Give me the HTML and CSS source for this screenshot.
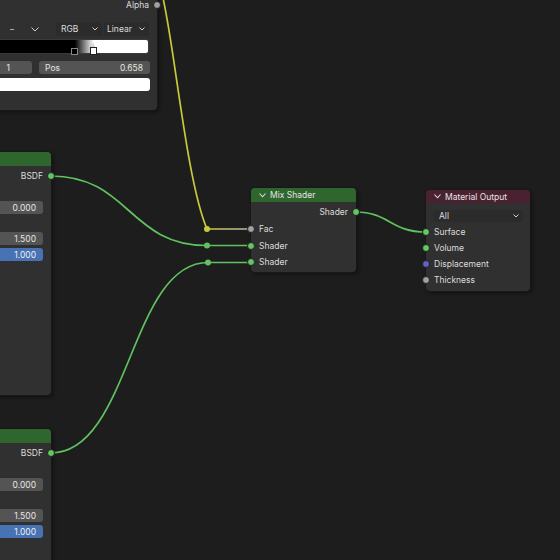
FILE: index.html
```html
<!DOCTYPE html>
<html>
<head>
<meta charset="utf-8">
<link rel="stylesheet" href="styles.css">
</head>
<body>
<div class="canvas">
  <svg class="wires" width="560" height="560" viewBox="0 0 560 560">
    <defs>
      <linearGradient id="yg" x1="207" y1="0" x2="251" y2="0" gradientUnits="userSpaceOnUse">
        <stop offset="0" stop-color="#c9c83c"/>
        <stop offset="1" stop-color="#b8b8b0"/>
      </linearGradient>
    </defs>
    <path d="M162 -6 C174 40 186 180 207 229" class="w-yellow"/>
    <path d="M207 229 H251" stroke="url(#yg)" fill="none" stroke-width="1.7"/>
    <path d="M51 176 C129 176 129 245.5 207 245.5 H251" class="w-green"/>
    <path d="M51 453 C130 453 130 262.5 208 262.5 H251" class="w-green"/>
    <path d="M355 212 C390 212 390 232 426 232" class="w-green"/>
    <circle cx="207" cy="229" r="3" fill="#c9c83c"/>
    <circle cx="207" cy="245.5" r="3" fill="#5fc15f"/>
    <circle cx="208" cy="262.5" r="3" fill="#5fc15f"/>
  </svg>

  <div class="node ramp-node">
    <div class="row out"><span class="label">Alpha</span><span class="sock r gray"></span></div>
    <div class="ctrl">
      <span class="icon-btn">−</span>
      <span class="icon-btn chev-btn"><svg width="8" height="5" viewBox="0 0 8 5"><polyline points="0.5,0.5 4,4 7.5,0.5" fill="none" stroke="#cfcfcf" stroke-width="1"/></svg></span>
      <span class="menu rgb">RGB<svg width="6" height="4" viewBox="0 0 6 4"><polyline points="0.5,0.5 3,3 5.5,0.5" fill="none" stroke="#cfcfcf" stroke-width="1"/></svg></span>
      <span class="menu lin">Linear<svg width="6" height="4" viewBox="0 0 6 4"><polyline points="0.5,0.5 3,3 5.5,0.5" fill="none" stroke="#cfcfcf" stroke-width="1"/></svg></span>
    </div>
    <div class="ramp">
      <span class="stop black"></span>
      <span class="stop white"></span>
    </div>
    <div class="fields">
      <span class="field idx">1</span>
      <span class="field pos"><span>Pos</span><span>0.658</span></span>
    </div>
    <div class="swatch"></div>
  </div>

  <div class="node bsdf-node n1">
    <div class="head green"></div>
    <div class="row out first"><span class="label">BSDF</span><span class="sock r green"></span></div>
    <div class="field val f0">0.000</div>
    <div class="field val f1">1.500</div>
    <div class="field val f2 blue">1.000</div>
  </div>

  <div class="node bsdf-node n2">
    <div class="head green"></div>
    <div class="row out first"><span class="label">BSDF</span><span class="sock r green"></span></div>
    <div class="field val f0">0.000</div>
    <div class="field val f1">1.500</div>
    <div class="field val f2 blue">1.000</div>
  </div>

  <div class="node mix-node">
    <div class="head green titled">
      <svg class="hchev" width="7" height="5" viewBox="0 0 7 5"><polyline points="0.5,0.5 3.5,3.8 6.5,0.5" fill="none" stroke="#e0e0e0" stroke-width="1.1"/></svg>
      <span>Mix Shader</span>
    </div>
    <div class="row out first"><span class="label">Shader</span><span class="sock r green"></span></div>
    <div class="row in fac"><span class="sock l gray"></span><span class="label">Fac</span></div>
    <div class="row in"><span class="sock l green"></span><span class="label">Shader</span></div>
    <div class="row in"><span class="sock l green"></span><span class="label">Shader</span></div>
  </div>

  <div class="node out-node">
    <div class="head red titled">
      <svg class="hchev" width="7" height="5" viewBox="0 0 7 5"><polyline points="0.5,0.5 3.5,3.8 6.5,0.5" fill="none" stroke="#e0e0e0" stroke-width="1.1"/></svg>
      <span>Material Output</span>
    </div>
    <div class="menu target">All<svg width="6" height="4" viewBox="0 0 6 4"><polyline points="0.5,0.5 3,3 5.5,0.5" fill="none" stroke="#cfcfcf" stroke-width="1"/></svg></div>
    <div class="row in surf"><span class="sock l green"></span><span class="label">Surface</span></div>
    <div class="row in"><span class="sock l green"></span><span class="label">Volume</span></div>
    <div class="row in"><span class="sock l purple"></span><span class="label">Displacement</span></div>
    <div class="row in"><span class="sock l gray"></span><span class="label">Thickness</span></div>
  </div>
</div>
</body>
</html>
```

FILE: styles.css
```css
html, body {
  margin: 0;
  padding: 0;
  background: #1d1d1d;
}
body {
  font-family: Inter, "DejaVu Sans", sans-serif;
  font-size: 8.5px;
  color: #dcdcdc;
}
.canvas {
  position: relative;
  width: 560px;
  height: 560px;
  overflow: hidden;
  background: #1d1d1d;
}
.wires {
  position: absolute;
  left: 0;
  top: 0;
}
.w-yellow {
  fill: none;
  stroke: #c9c83c;
  stroke-width: 1.7;
}
.w-green {
  fill: none;
  stroke: #5fc15f;
  stroke-width: 1.7;
}

.node {
  position: absolute;
  box-sizing: border-box;
  background: #303030;
  border-radius: 4px;
  box-shadow: 0 0 0 1px #181818, 2px 2px 4px rgba(0, 0, 0, 0.45);
  display: flex;
  flex-direction: column;
}

.head {
  height: 14px;
  border-radius: 4px 4px 0 0;
  flex: none;
  display: flex;
  align-items: center;
}
.head.green { background: #2e662d; }
.head.red { background: #4a2130; height: 13px; }
.head.titled {
  padding-left: 8px;
  color: #e4e4e4;
  gap: 4px;
}
.hchev { flex: none; }

.row {
  position: relative;
  height: 16px;
  display: flex;
  align-items: center;
  flex: none;
}
.row.out {
  justify-content: flex-end;
  padding-right: 8px;
}
.row.in {
  padding-left: 8px;
}
.sock {
  position: absolute;
  top: 50%;
  width: 6px;
  height: 6px;
  margin-top: -4px;
  border-radius: 50%;
  border: 1px solid #1f1f1f;
}
.sock.r { right: -4px; }
.sock.l { left: -4px; }
.sock.green { background: #63c763; }
.sock.gray { background: #a1a1a1; }
.sock.purple { background: #6363c7; }

.field {
  box-sizing: border-box;
  background: #545454;
  border-radius: 3px;
  height: 13px;
  display: flex;
  align-items: center;
  color: #e6e6e6;
  flex: none;
}
.field.blue { background: #4772b3; color: #f0f0f0; }

.menu {
  box-sizing: border-box;
  background: #2b2b2b;
  border-radius: 3px;
  display: flex;
  align-items: center;
  justify-content: space-between;
  color: #dcdcdc;
}

/* color ramp node */
.ramp-node {
  left: -30px;
  top: -12px;
  width: 187px;
  height: 122px;
  padding-top: 9px;
}
.ramp-node .row.out { padding-right: 8px; }
.ctrl {
  margin-top: 9px;
  height: 14px;
  display: flex;
  align-items: center;
  justify-content: flex-end;
  padding-right: 8px;
}
.icon-btn {
  width: 14px;
  text-align: center;
  color: #cfcfcf;
  display: flex;
  justify-content: center;
  align-items: center;
}
.icon-btn:first-child { margin-right: 9px; }
.chev-btn { margin-right: 14px; }
.menu.rgb {
  width: 46px;
  height: 14px;
  padding: 0 4px 0 5px;
  margin-right: 2px;
}
.menu.lin {
  width: 45px;
  height: 14px;
  padding: 0 4px 0 3px;
}
.ramp {
  position: relative;
  margin: 4px 9px 0 8px;
  height: 13px;
  border-radius: 2px;
  background: linear-gradient(to right, #000 0%, #000 57%, #fff 68%, #fff 100%);
  box-shadow: 0 0 0 1px #3a3a3a;
}
.stop {
  position: absolute;
  bottom: -2px;
  width: 7px;
  height: 7px;
  margin-left: -3.5px;
  box-sizing: border-box;
}
.stop.black {
  left: 57%;
  background: #000;
  border: 1px solid #888;
}
.stop.white {
  left: 68%;
  background: #fff;
  border: 1px solid #222;
  height: 8px;
}
.stop.white::before {
  content: "";
  position: absolute;
  left: 0;
  top: -6px;
  border-left: 2.5px solid transparent;
  border-right: 2.5px solid transparent;
  border-bottom: 5px solid #d8d8d8;
}
.fields {
  margin-top: 8px;
  display: flex;
  gap: 7px;
  padding: 0 7px 0 8px;
}
.field.idx {
  width: 54px;
  justify-content: flex-end;
  padding-right: 22px;
}
.field.pos {
  flex: 1;
  justify-content: space-between;
  padding: 0 7px 0 6px;
}
.swatch {
  margin: 4px 7px 0 8px;
  height: 13px;
  background: #fff;
  border-radius: 3px;
}

/* principled bsdf nodes */
.bsdf-node {
  left: -60px;
  width: 111px;
}
.bsdf-node.n1 { top: 152px; height: 243px; }
.bsdf-node.n2 { top: 429px; height: 160px; }
.bsdf-node .row.first { margin-top: 2px; }
.field.val {
  margin: 0 8px 0 8px;
  justify-content: flex-end;
  padding-right: 7px;
}
.field.f0 { margin-top: 17px; }
.field.f1 { margin-top: 18px; }
.field.f2 { margin-top: 3px; }

/* mix shader */
.mix-node {
  left: 251px;
  top: 188px;
  width: 105px;
  height: 84px;
}
.mix-node .row.first { margin-top: 2px; }
.mix-node .row.in { height: 16.5px; }
.mix-node .row.fac { margin-top: 1px; }

/* material output */
.out-node {
  left: 426px;
  top: 190px;
  width: 104px;
  height: 101px;
}
.menu.target {
  margin: 7px 7px 0 7px;
  height: 12px;
  padding: 0 4px 0 6px;
}
.out-node .row.surf { margin-top: 2px; }
```
